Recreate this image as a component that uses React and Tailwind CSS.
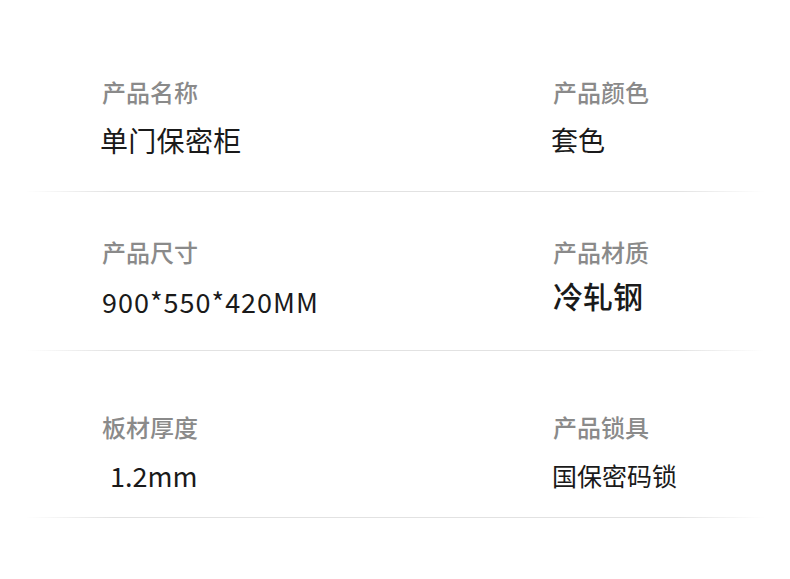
export default function App() {
  const font = { fontFamily: '"Noto Sans CJK SC", "Noto Sans", sans-serif' };
  const Line = () => (
    <div className="mx-[25px] h-px bg-[linear-gradient(to_right,rgba(226,226,226,0),#e2e2e2_12%,#e2e2e2_88%,rgba(226,226,226,0))]" />
  );
  return (
    <div className="w-[790px] h-[579px] bg-white overflow-hidden" style={font}>
      {/* Row 1 */}
      <div className="flex pl-[102px] pt-[80px] pb-[37px]">
        <div className="w-[451px]">
          <div className="text-[24px] leading-none font-medium text-[#8a8a8a]">产品名称</div>
          <div className="mt-[22px] text-[28px] leading-none text-[#1a1a1a] -ml-[2px] tracking-[0.3px]">单门保密柜</div>
        </div>
        <div>
          <div className="text-[24px] leading-none font-medium text-[#8a8a8a]">产品颜色</div>
          <div className="mt-[22px] text-[27px] leading-none text-[#1a1a1a] -ml-[2px]">套色</div>
        </div>
      </div>
      <Line />
      {/* Row 2 */}
      <div className="flex pl-[102px] pt-[48px] pb-[37px]">
        <div className="w-[451px]">
          <div className="text-[24px] leading-none font-medium text-[#8a8a8a]">产品尺寸</div>
          <div className="mt-[24px] h-[25px] text-[27px] leading-none text-[#1a1a1a] tracking-[1px]">900*550*420MM</div>
        </div>
        <div>
          <div className="text-[24px] leading-none font-medium text-[#8a8a8a]">产品材质</div>
          <div className="mt-[16px] text-[30px] leading-none text-[#1a1a1a] font-medium">冷轧钢</div>
        </div>
      </div>
      <Line />
      {/* Row 3 */}
      <div className="flex pl-[102px] pt-[64px] pb-[28px]">
        <div className="w-[451px]">
          <div className="text-[24px] leading-none font-medium text-[#8a8a8a]">板材厚度</div>
          <div className="mt-[23px] pl-[8px] text-[27px] leading-none text-[#1a1a1a]">1.2mm</div>
        </div>
        <div>
          <div className="text-[24px] leading-none font-medium text-[#8a8a8a]">产品锁具</div>
          <div className="mt-[24px] text-[25px] leading-none text-[#1a1a1a] -ml-[1px]">国保密码锁</div>
        </div>
      </div>
      <Line />
    </div>
  );
}
